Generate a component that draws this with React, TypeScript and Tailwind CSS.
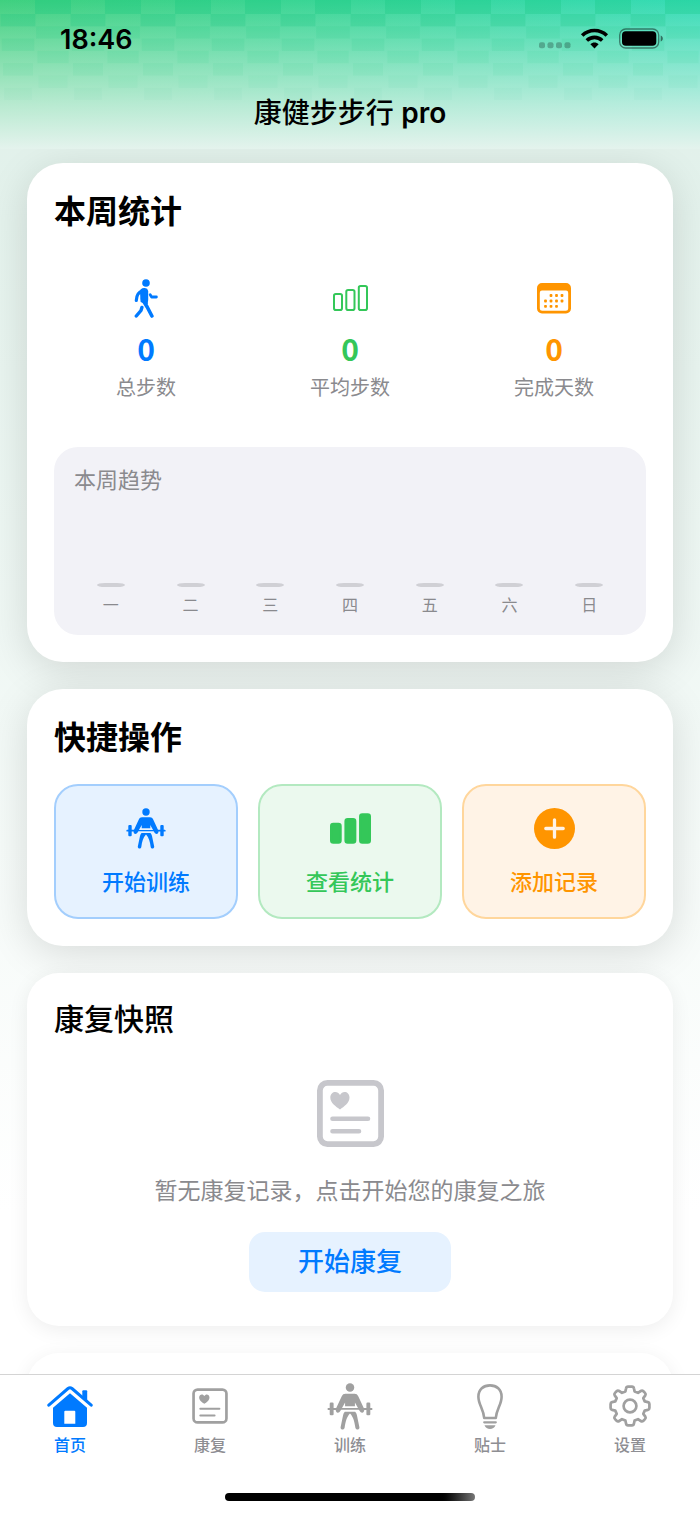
import React from 'react';

const FONT = "font-['Inter','Noto_Sans_CJK_SC',sans-serif]";

// ─── Icons ───────────────────────────────────────────────────────────────────

type IconProps = { className?: string };

const WalkIcon: React.FC<IconProps> = ({ className }) => (
  <svg viewBox="0 0 24 39" className={className} fill="none" stroke="currentColor" strokeLinecap="round" strokeLinejoin="round">
    <circle cx="12" cy="4" r="3.8" fill="currentColor" stroke="none" />
    <path
      d="M7 11 C9 9.3 13 9.2 13.5 12 V20.5 C13.5 22.5 12.8 23.5 13.2 24.5 L7.3 22.5 C6.5 18.5 7.5 16.5 6.5 13.5Z"
      fill="currentColor"
      strokeWidth="1.4"
    />
    <path d="M8.5 12 C4.5 13 2.5 16 2.3 21.5" strokeWidth="3.2" />
    <path d="M9.5 22 L13.2 28 L17.9 37" strokeWidth="3.6" />
    <path d="M7.9 28.5 L7 31.5 L2.3 37" strokeWidth="3.4" />
    <path d="M16.2 15.8 L17.6 18 H22.4" strokeWidth="2.8" />
  </svg>
);

const BarsIcon: React.FC<IconProps & { filled?: boolean }> = ({ className, filled }) => (
  <svg viewBox="0 0 35 26" className={className} fill={filled ? 'currentColor' : 'none'} stroke="currentColor" strokeWidth="2">
    <rect x="1" y="9" width="8" height="16" rx="1.8" />
    <rect x="13.3" y="5" width="8.2" height="20" rx="1.8" />
    <rect x="25.8" y="1" width="8.2" height="24" rx="1.8" />
  </svg>
);

const DATE_DOTS = [
  [14, 12.5], [19.5, 12.5], [25, 12.5],
  [8.5, 18], [14, 18], [19.5, 18], [25, 18],
  [8.5, 23.3], [14, 23.3], [19.5, 23.3],
];

const CalendarIcon: React.FC<IconProps> = ({ className }) => (
  <svg viewBox="0 0 34 31" className={className} fill="currentColor">
    <path
      fillRule="evenodd"
      d="M5 0 H29 A5 5 0 0 1 34 5 V25.5 A5 5 0 0 1 29 30.5 H5 A5 5 0 0 1 0 25.5 V5 A5 5 0 0 1 5 0Z M5 7.5 A2.2 2.2 0 0 0 2.8 9.7 V25.3 A2.5 2.5 0 0 0 5.3 27.8 H28.7 A2.5 2.5 0 0 0 31.2 25.3 V9.7 A2.2 2.2 0 0 0 29 7.5Z"
    />
    {DATE_DOTS.map(([x, y]) => (
      <rect key={`${x}-${y}`} x={x - 1.4} y={y - 1.4} width="2.8" height="2.8" rx="0.9" />
    ))}
  </svg>
);

const LifterIcon: React.FC<IconProps> = ({ className }) => (
  <svg viewBox="0 0 40 41" className={className} fill="currentColor">
    <circle cx="20" cy="4" r="3.7" />
    <path d="M16 9.3 H24 C25.5 9.3 26.5 10 27.2 11.5 L32.3 22.5 C33.2 25.8 30 27.3 28.3 24.3 L24.3 17 V20.3 H15.7 V17 L11.7 24.3 C10 27.3 6.8 25.8 7.7 22.5 L12.8 11.5 C13.5 10 14.5 9.3 16 9.3Z" />
    <path d="M1.2 21.8 H8.5 V23.5 H1.2 A0.85 0.85 0 0 1 1.2 21.8Z M31.5 21.8 H38.8 A0.85 0.85 0 0 1 38.8 23.5 H31.5Z M11 21.9 H29 V23.3 H11Z" />
    <rect x="2.3" y="17" width="3.4" height="11.2" rx="1" />
    <rect x="34.3" y="17" width="3.4" height="11.2" rx="1" />
    <path d="M15.5 25 H24.5 Q25.7 26.3 26 28 L28.2 38.5 C28.4 41 25.2 41.3 24.7 39 C24 34 23 29.5 20 26.5 C17 29.5 16 34 15.3 39 C14.8 41.3 11.6 41 11.8 38.5 L14 28 Q14.3 26.3 15.5 25Z" />
  </svg>
);

const PlusCircleIcon: React.FC<IconProps> = ({ className }) => (
  <svg viewBox="0 0 40 40" className={className}>
    <circle cx="20" cy="20" r="20" fill="currentColor" />
    <path d="M20 11.5 V28.5 M11.5 20 H28.5" stroke="#fff3e6" strokeWidth="3.2" strokeLinecap="round" />
  </svg>
);

const HeartCardIcon: React.FC<IconProps & { thin?: boolean }> = ({ className, thin }) => (
  <svg viewBox="0 0 67 67" className={className} fill="none" stroke="currentColor">
    <rect x="2.9" y="2.9" width="61.2" height="61.2" rx="7.5" strokeWidth={thin ? 5 : 5.8} />
    <path
      d="M23 29.5 C19 26.5 13.3 23 13.3 17.5 C13.3 11.5 20.5 10 23 15 C25.5 10 32.5 11.5 32.5 17.5 C32.5 23 27 26.5 23 29.5Z"
      fill="currentColor"
      stroke="none"
    />
    <path d="M15.5 38.8 H51 M15.5 51.2 H42" strokeWidth={thin ? 3.8 : 4.6} strokeLinecap="round" />
  </svg>
);

const HomeIcon: React.FC<IconProps> = ({ className }) => (
  <svg viewBox="0 0 46 41" className={className} fill="currentColor">
    <path d="M1.8 19.2 L21 2.5 Q23 0.9 25 2.5 L44.2 19.2" fill="none" stroke="currentColor" strokeWidth="3" strokeLinecap="round" strokeLinejoin="round" />
    <path d="M35.3 5.2 Q35.3 4.2 36.3 4.2 H39.2 Q40.2 4.2 40.2 5.2 V15 L35.3 11Z" />
    <path
      fillRule="evenodd"
      d="M23 7.2 L40 21.7 V37 Q40 41 36 41 H10 Q6 41 6 37 V21.7Z M18.3 24.7 Q17.3 24.7 17.3 25.7 V37.7 H28.3 V25.7 Q28.3 24.7 27.3 24.7Z"
    />
  </svg>
);

const BulbIcon: React.FC<IconProps> = ({ className }) => (
  <svg viewBox="0 0 26 45" className={className} fill="none" stroke="currentColor" strokeWidth="2.6" strokeLinejoin="round">
    <path d="M7.2 34 C6.5 25 1.4 20.5 1.4 12.7 C1.4 5.3 6.5 1.4 13 1.4 C19.5 1.4 24.6 5.3 24.6 12.7 C24.6 20.5 19.5 25 18.8 34Z" />
    <path d="M7.2 38.3 H18.8" strokeWidth="2.2" strokeLinecap="round" />
    <path d="M7.5 41.2 H18.5 C17.5 43.8 15.5 45 13 45 C10.5 45 8.5 43.8 7.5 41.2Z" fill="currentColor" stroke="none" />
  </svg>
);

const GearIcon: React.FC<IconProps> = ({ className }) => (
  <svg viewBox="0 0 42 42" className={className} fill="none" stroke="currentColor" strokeWidth="2.7" strokeLinejoin="round">
    <circle cx="21" cy="21" r="6.4" />
    <path d="M19 1.6 H23 Q24.6 1.6 24.9 3.2 L25.6 6.4 L29 7.8 L31.8 6 Q33.2 5.1 34.4 6.3 L36 7.9 Q37.2 9.1 36.3 10.4 L34.3 13.1 L35.7 16.4 L38.9 17.1 Q40.4 17.4 40.4 19 V23 Q40.4 24.6 38.9 24.9 L35.7 25.6 L34.3 28.9 L36.3 31.6 Q37.2 32.9 36 34.1 L34.4 35.7 Q33.2 36.9 31.8 36 L29 34.2 L25.6 35.6 L24.9 38.8 Q24.6 40.4 23 40.4 H19 Q17.4 40.4 17.1 38.8 L16.4 35.6 L13 34.2 L10.2 36 Q8.8 36.9 7.6 35.7 L6 34.1 Q4.8 32.9 5.7 31.6 L7.7 28.9 L6.3 25.6 L3.1 24.9 Q1.6 24.6 1.6 23 V19 Q1.6 17.4 3.1 17.1 L6.3 16.4 L7.7 13.1 L5.7 10.4 Q4.8 9.1 6 7.9 L7.6 6.3 Q8.8 5.1 10.2 6 L13 7.8 L16.4 6.4 L17.1 3.2 Q17.4 1.6 19 1.6Z" />
  </svg>
);

// ─── Header ──────────────────────────────────────────────────────────────────

// Checkered tiles that shrink and fade towards the bottom of the header
const TILE_OPACITY = [0.26, 0.2, 0.11, 0.1, 0.075, 0.06, 0.04, 0.03];

const HeaderPattern: React.FC = () => (
  <svg viewBox="0 0 700 149" preserveAspectRatio="none" className="absolute inset-0 h-full w-full">
    <defs>
      <linearGradient id="hue" x1="0" x2="1" y1="0" y2="0">
        <stop offset="0" stopColor="#34ce78" />
        <stop offset="0.5" stopColor="#2dd492" />
        <stop offset="1" stopColor="#2adab2" />
      </linearGradient>
      <linearGradient id="fade" x1="0" x2="0" y1="0" y2="1">
        <stop offset="0" stopColor="#e4f3ed" stopOpacity="0.06" />
        <stop offset="0.4" stopColor="#e4f3ed" stopOpacity="0.46" />
        <stop offset="0.7" stopColor="#e4f3ed" stopOpacity="0.75" />
        <stop offset="1" stopColor="#e4f3ed" stopOpacity="1" />
      </linearGradient>
    </defs>
    <rect width="700" height="149" fill="url(#hue)" />
    <rect width="700" height="149" fill="url(#fade)" />
    {TILE_OPACITY.map((opacity, row) =>
      Array.from({ length: 10 }, (_, i) => {
        const inset = row * 0.6;
        const x = (i * 2 + (row % 2 === 0 ? 1 : 0)) * 35;
        return (
          <rect
            key={`${row}-${i}`}
            x={x + inset}
            y={row * 12.3 + (row ? 1.7 : 0)}
            width={36 - inset * 2}
            height={row ? 12.3 : 14}
            fill="#10c47c"
            opacity={opacity}
          />
        );
      }),
    )}
  </svg>
);

const StatusIcons: React.FC = () => (
  <svg viewBox="0 0 126 24" className="h-6 w-[126px]" fill="none">
    {[1, 9.5, 18, 26.5].map((x) => (
      <rect key={x} x={x} y="14.3" width="6" height="6" rx="2" fill="#000" opacity="0.25" />
    ))}
    <g stroke="#000" strokeWidth="3.6">
      <path d="M44.2 7.5 C51 0.8 62 0.8 68.8 7.5" />
      <path d="M48.8 12.5 C53.2 8.3 59.8 8.3 64.2 12.5" />
    </g>
    <path d="M56.5 20.5 L52.4 16.2 C54.7 14 58.3 14 60.6 16.2Z" fill="#000" />
    <rect x="81.7" y="1" width="39" height="19" rx="6" stroke="#000" strokeWidth="1.3" opacity="0.45" />
    <rect x="84" y="3.3" width="34.3" height="14.4" rx="3.8" fill="#000" />
    <path d="M122.7 7.5 C125.5 8.3 125.5 12.7 122.7 13.5Z" fill="#000" opacity="0.5" />
  </svg>
);

// ─── Content blocks ──────────────────────────────────────────────────────────

const STATS = [
  { label: '总步数', value: 0, color: 'text-[#007aff]', icon: <WalkIcon className="h-[39px] w-6" /> },
  { label: '平均步数', value: 0, color: 'text-[#34c759]', icon: <BarsIcon className="h-[26px] w-[35px]" /> },
  { label: '完成天数', value: 0, color: 'text-[#ff9500]', icon: <CalendarIcon className="h-[31px] w-[34px]" /> },
];

const DAYS = ['一', '二', '三', '四', '五', '六', '日'];

const ACTIONS = [
  { label: '开始训练', style: 'border-[#a3cefd] bg-[#e6f2ff] text-[#007aff]', icon: <LifterIcon className="h-[41px] w-10" /> },
  { label: '查看统计', style: 'border-[#b3e9c0] bg-[#ebf9ee] text-[#34c759]', icon: <BarsIcon filled className="h-[31px] w-[41px]" /> },
  { label: '添加记录', style: 'border-[#ffd69c] bg-[#fff3e6] text-[#ff9500]', icon: <PlusCircleIcon className="size-[41px]" /> },
];

const TABS = [
  { label: '首页', icon: <HomeIcon className="h-[41px] w-[46px]" />, active: true },
  { label: '康复', icon: <HeartCardIcon thin className="size-9" /> },
  { label: '训练', icon: <LifterIcon className="h-[47px] w-[46px]" /> },
  { label: '贴士', icon: <BulbIcon className="h-[45px] w-[26px]" /> },
  { label: '设置', icon: <GearIcon className="size-[42px]" /> },
];

const WeeklyStats: React.FC = () => (
  <section className="rounded-[36px] bg-white p-[27px] shadow-[0_8px_40px_rgba(0,0,0,0.13)]">
    <h2 className="text-[32px] leading-11 font-bold">本周统计</h2>
    <div className="mt-11 grid grid-cols-3 gap-5">
      {STATS.map((s) => (
        <div key={s.label} className="flex flex-col items-center">
          <div className={`flex h-10 items-center ${s.color}`}>{s.icon}</div>
          <div className={`mt-3 font-['Noto_Sans_CJK_SC',sans-serif] text-[30px] leading-9 font-bold ${s.color}`}>{s.value}</div>
          <div className="mt-[6px] text-xl leading-8 text-[#8a8a8e]">{s.label}</div>
        </div>
      ))}
    </div>
    <div className="mt-[43px] rounded-3xl bg-[#f2f2f7] px-5 pt-[19px] pb-4">
      <h3 className="text-[22px] leading-7 text-[#8a8a8e]">本周趋势</h3>
      <div className="-mx-[3px] mt-[89px] grid grid-cols-7">
        {DAYS.map((d) => (
          <div key={d} className="flex flex-col items-center">
            <div className="h-1 w-7 rounded-[8px/2px] bg-[#d0d0d5]" />
            <div className="mt-1 text-base leading-7 text-[#8a8a8e]">{d}</div>
          </div>
        ))}
      </div>
    </div>
  </section>
);

const QuickActions: React.FC = () => (
  <section className="rounded-[36px] bg-white p-[27px] shadow-[0_8px_40px_rgba(0,0,0,0.13)]">
    <h2 className="text-[32px] leading-11 font-bold">快捷操作</h2>
    <div className="mt-6 grid grid-cols-3 gap-5">
      {ACTIONS.map((a) => (
        <button key={a.label} type="button" className={`flex flex-col items-center rounded-3xl border-2 px-2 pt-5 pb-[19px] ${a.style}`}>
          <span className="flex h-11 items-center">{a.icon}</span>
          <span className="mt-4 text-[22px] leading-8 font-medium">{a.label}</span>
        </button>
      ))}
    </div>
  </section>
);

const RecoverySnapshot: React.FC = () => (
  <section className="rounded-[32px] bg-white px-[27px] pt-[27px] pb-[34px] shadow-[0_4px_20px_rgba(0,0,0,0.07)]">
    <h2 className="text-[30px] leading-[38px] font-medium">康复快照</h2>
    <div className="mt-[42px] flex flex-col items-center">
      <HeartCardIcon className="size-[67px] text-[#c7c7cc]" />
      <p className="mt-7 text-[23px] leading-8 text-[#8a8a8e]">暂无康复记录，点击开始您的康复之旅</p>
      <button type="button" className="mt-[25px] rounded-2xl bg-[#e6f2ff] px-[49px] py-3 text-[26px] leading-9 font-medium text-[#007aff]">
        开始康复
      </button>
    </div>
  </section>
);

const App: React.FC = () => (
  <div className={`flex h-screen flex-col overflow-hidden bg-linear-to-b from-[#deefe8] to-white to-80% text-black ${FONT}`}>
    <header className="relative shrink-0">
      <HeaderPattern />
      <div className="relative flex items-center justify-between pt-[26px] pr-9 pl-[60px]">
        <time className="text-[27px] leading-7 font-semibold">18:46</time>
        <StatusIcons />
      </div>
      <h1 className="relative pt-[39px] pb-4 text-center text-[28px] leading-10 font-medium">
        康健步步行 <span className="font-semibold">pro</span>
      </h1>
    </header>

    <main className="flex min-h-0 flex-1 flex-col gap-[27px] overflow-hidden px-[27px] pt-[14px] *:shrink-0">
      <WeeklyStats />
      <QuickActions />
      <RecoverySnapshot />
      <section className="h-40 rounded-[32px] bg-white shadow-[0_4px_20px_rgba(0,0,0,0.07)]" />
    </main>

    <footer className="shrink-0 border-t border-[#d4d4d4] bg-white pb-[14px]">
      <nav className="grid grid-cols-5">
        {TABS.map((t) => (
          <a key={t.label} href="#" className={`flex flex-col items-center pt-[7px] ${t.active ? 'text-[#007aff]' : 'text-[#8e8e93]'}`}>
            <span className={`flex h-12 items-center ${t.active ? '' : 'text-[#a0a0a0]'}`}>{t.icon}</span>
            <span className="mt-[3px] text-base leading-6 font-medium">{t.label}</span>
          </a>
        ))}
      </nav>
      <div className="mx-auto mt-9 h-2 w-[250px] rounded-full bg-linear-to-r from-black from-85% to-[#777]" />
    </footer>
  </div>
);

export default App;
